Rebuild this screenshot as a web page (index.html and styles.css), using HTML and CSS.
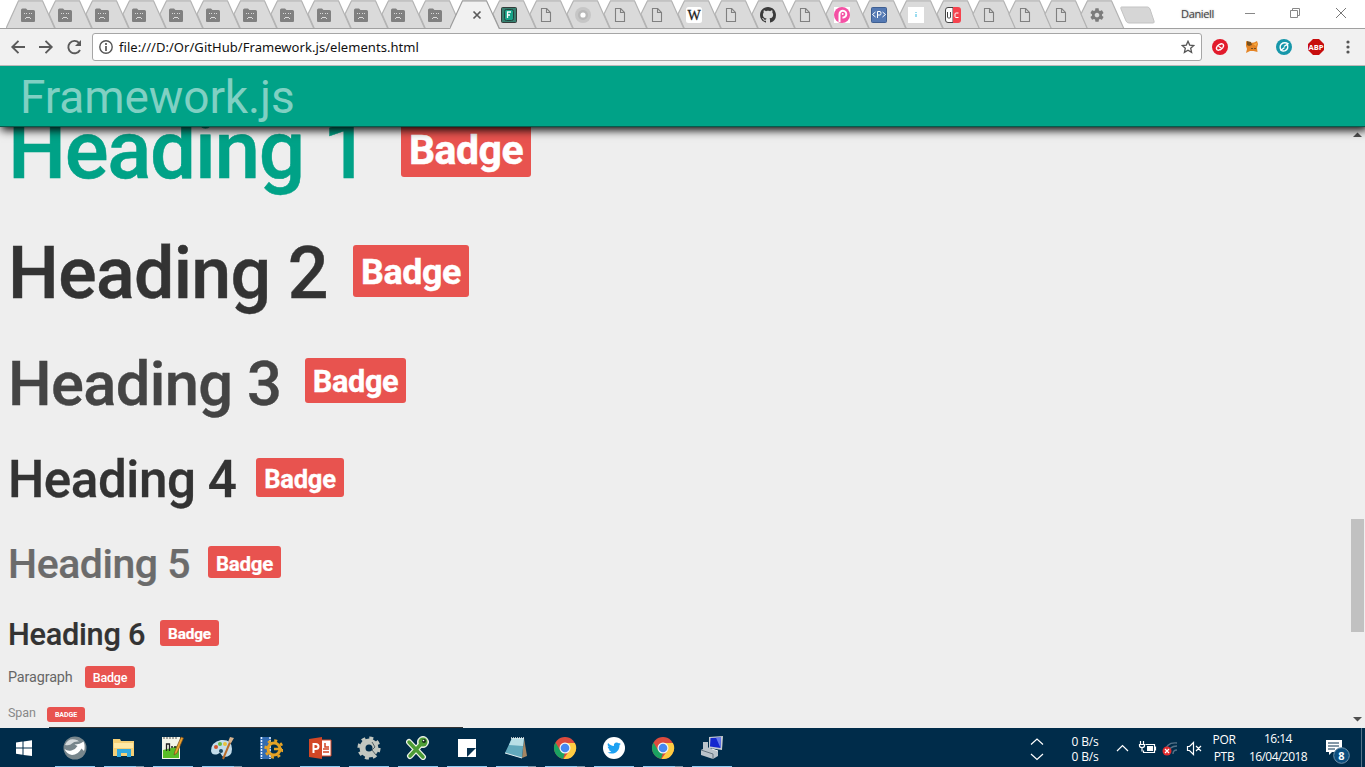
FILE: index.html
```html
<!DOCTYPE html>
<html lang="en">
<head>
<meta charset="utf-8">
<title>Framework.js</title>
<link rel="stylesheet" href="styles.css">
</head>
<body>
<svg class="defs" width="0" height="0">
  <symbol id="tab" viewBox="0 0 50 28" overflow="visible"><path d="M12.3 28.5L6 14L12.5.8H36.5L48.8 28.5" fill="#dadada" stroke="#b3b3b3" stroke-width="1.2"/></symbol>
  <symbol id="sad" viewBox="0 0 16 16"><path d="M1 3q0-1.500 1.500-1.500H6L7.500 3H13.500Q15 3 15 4.500V14q0 1-1 1H2q-1 0-1-1z" fill="#808080"/><path d="M4 6h1v1h-1zM6 6h1v1H6zM11 6h1v1h-1zM9 6h1v1H9zM5 11h1v1H5zM6 10h4v1H6zM10 11h1v1h-1z" fill="#dadada"/></symbol>
  <symbol id="doc" viewBox="0 0 16 16"><path d="M3.500 1.500H8.700L12.500 5.500V14.500H3.500zM8.500 1.500V5.500H12.500" fill="#dcdcdc" stroke="#808080" stroke-width="1.100"/></symbol>
  <symbol id="gear" viewBox="0 0 24 24"><path fill="currentColor" d="M19.430 12.980c.040-.320.070-.640.070-.980s-.030-.660-.070-.980l2.110-1.650c.190-.150.240-.420.120-.640l-2-3.460c-.120-.220-.390-.300-.610-.220l-2.490 1c-.520-.400-1.080-.730-1.690-.980l-.380-2.650C14.460 2.180 14.250 2 14 2h-4c-.250 0-.460.180-.490.420l-.380 2.650c-.610.250-1.170.590-1.690.980l-2.490-1c-.230-.090-.490 0-.610.220l-2 3.460c-.130.220-.070.490.120.640l2.110 1.650c-.040.320-.070.650-.070.980s.030.660.070.980l-2.110 1.650c-.190.150-.240.420-.120.640l2 3.460c.120.220.390.300.610.220l2.490-1c.520.400 1.080.730 1.690.980l.380 2.650c.030.240.240.420.490.420h4c.250 0 .460-.180.490-.420l.380-2.650c.610-.250 1.170-.590 1.690-.980l2.490 1c.230.090.490 0 .610-.220l2-3.460c.120-.220.070-.490-.120-.640l-2.110-1.650zM12 15.500c-1.930 0-3.500-1.570-3.500-3.500s1.570-3.500 3.500-3.500 3.500 1.570 3.500 3.500-1.570 3.500-3.500 3.500z"/></symbol>
  <symbol id="chrome" viewBox="0 0 24 24"><circle cx="12" cy="12" r="11" fill="#dd4b3e"/><path d="M2.500 6.400L7.200 14.600 12 17 10 22.900A11 11 0 0 1 2.500 6.400z" fill="#1ba261"/><path d="M12 7H21.900A11 11 0 0 1 10.500 22.900L16.500 14.500z" fill="#ffcd42"/><circle cx="12" cy="12" r="5.500" fill="#f4f4f4"/><circle cx="12" cy="12" r="4.300" fill="#4688f1"/></symbol>
</svg>

<div class="tabstrip">
  <div class="tabs">
    <div class="tab"><svg class="shape"><path d="M0 28.500L12.500.8H36.500L48.800 28.500" fill="#dadada" stroke="#b3b3b3" stroke-width="1.200"/></svg><svg class="fav"><use href="#sad"/></svg></div>
    <div class="tab"><svg class="shape"><use href="#tab"/></svg><svg class="fav"><use href="#sad"/></svg></div>
    <div class="tab"><svg class="shape"><use href="#tab"/></svg><svg class="fav"><use href="#sad"/></svg></div>
    <div class="tab"><svg class="shape"><use href="#tab"/></svg><svg class="fav"><use href="#sad"/></svg></div>
    <div class="tab"><svg class="shape"><use href="#tab"/></svg><svg class="fav"><use href="#sad"/></svg></div>
    <div class="tab"><svg class="shape"><use href="#tab"/></svg><svg class="fav"><use href="#sad"/></svg></div>
    <div class="tab"><svg class="shape"><use href="#tab"/></svg><svg class="fav"><use href="#sad"/></svg></div>
    <div class="tab"><svg class="shape"><use href="#tab"/></svg><svg class="fav"><use href="#sad"/></svg></div>
    <div class="tab"><svg class="shape"><use href="#tab"/></svg><svg class="fav"><use href="#sad"/></svg></div>
    <div class="tab"><svg class="shape"><use href="#tab"/></svg><svg class="fav"><use href="#sad"/></svg></div>
    <div class="tab"><svg class="shape"><use href="#tab"/></svg><svg class="fav"><use href="#sad"/></svg></div>
    <div class="tab"><svg class="shape"><use href="#tab"/></svg><svg class="fav"><use href="#sad"/></svg></div>
    <div class="tab active"><svg class="shape"><path d="M-.5 29L12.500.8H36.500L49.500 29" fill="#f1f1f1" stroke="#9c9c9c" stroke-width="1.200"/></svg><svg class="fav" viewBox="0 0 16 16"><path d="M4.500 4.500l7 7M11.500 4.500l-7 7" stroke="#5a5a5a" stroke-width="1.700"/></svg></div>
    <div class="tab"><svg class="shape"><use href="#tab"/></svg><svg class="fav" viewBox="0 0 16 16"><rect x=".5" y=".5" width="15" height="15" rx="1" fill="#35806f" stroke="#333c3a"/><rect x="3.500" y="2.500" width="9" height="11" rx="2" fill="#16a387" stroke="#22453e"/><path d="M6.500 11V5H10M6.500 8H9" fill="none" stroke="#fff" stroke-width="1.300"/></svg></div>
    <div class="tab"><svg class="shape"><use href="#tab"/></svg><svg class="fav"><use href="#doc"/></svg></div>
    <div class="tab"><svg class="shape"><use href="#tab"/></svg><svg class="fav" viewBox="0 0 16 16"><circle cx="8" cy="8" r="8" fill="#c6c6c6"/><circle cx="8" cy="8" r="5" fill="#b8b8b8"/><circle cx="8" cy="8" r="2.600" fill="#fff"/></svg></div>
    <div class="tab"><svg class="shape"><use href="#tab"/></svg><svg class="fav"><use href="#doc"/></svg></div>
    <div class="tab"><svg class="shape"><use href="#tab"/></svg><svg class="fav"><use href="#doc"/></svg></div>
    <div class="tab"><svg class="shape"><use href="#tab"/></svg><svg class="fav" viewBox="0 0 16 16"><rect width="16" height="16" rx="2.500" fill="#fff"/><text x="8" y="13" class="wiki" text-anchor="middle">W</text></svg></div>
    <div class="tab"><svg class="shape"><use href="#tab"/></svg><svg class="fav"><use href="#doc"/></svg></div>
    <div class="tab"><svg class="shape"><use href="#tab"/></svg><svg class="fav" viewBox="0 0 16 16"><path fill="#3b3b3b" d="M8 0C3.580 0 0 3.580 0 8c0 3.540 2.290 6.530 5.470 7.590.400.070.550-.170.550-.380 0-.190-.010-.820-.010-1.490-2.010.370-2.530-.490-2.690-.940-.090-.230-.480-.940-.820-1.130-.280-.150-.680-.520-.010-.530.630-.010 1.080.580 1.230.820.720 1.210 1.870.870 2.330.660.070-.520.280-.870.510-1.070-1.780-.200-3.640-.890-3.640-3.950 0-.870.310-1.590.820-2.150-.080-.200-.360-1.020.080-2.120 0 0 .670-.210 2.200.820.640-.180 1.320-.270 2-.270s1.360.090 2 .270c1.530-1.040 2.200-.820 2.200-.820.440 1.100.160 1.920.080 2.120.510.560.820 1.270.820 2.150 0 3.070-1.870 3.750-3.650 3.950.290.250.540.730.540 1.480 0 1.070-.010 1.930-.010 2.200 0 .210.150.460.550.380A8 8 0 0 0 16 8c0-4.420-3.580-8-8-8z"/></svg></div>
    <div class="tab"><svg class="shape"><use href="#tab"/></svg><svg class="fav"><use href="#doc"/></svg></div>
    <div class="tab"><svg class="shape"><use href="#tab"/></svg><svg class="fav" viewBox="0 0 16 16"><rect width="16" height="16" fill="#fff"/><circle cx="8" cy="8" r="8" fill="#f451a4"/><path d="M5.500 15V7.200A3.400 3.400 0 1 1 8.500 10.500" fill="none" stroke="#fff" stroke-width="2"/><circle cx="8.700" cy="7" r="1" fill="#fff"/></svg></div>
    <div class="tab"><svg class="shape"><use href="#tab"/></svg><svg class="fav" viewBox="0 0 16 16"><rect x=".5" y=".5" width="15" height="15" rx="1" fill="#5479b3" stroke="#3f5f92"/><path d="M4.500 5L1.500 7.500 4.500 10M11.500 5L14.500 7.500 11.500 10M6.500 11V4.500H9Q10 4.500 10 6.300T9 8H6.500" fill="none" stroke="#fff"/></svg></div>
    <div class="tab"><svg class="shape"><use href="#tab"/></svg><svg class="fav" viewBox="0 0 16 16"><rect width="16" height="16" fill="#fff"/><path d="M7 5h2v1H7zM7 7h2v3H7z" fill="#9adcf0"/></svg></div>
    <div class="tab short"><svg class="shape"><use href="#tab"/></svg><svg class="fav" viewBox="0 0 16 16"><path d="M3 .5H8V15.500H3Q.5 15.500.5 13V3Q.5.5 3 .5z" fill="#fff" stroke="#454545"/><path d="M8 0h5q3 0 3 3v10q0 3-3 3H8z" fill="#f5434e"/><path d="M2.500 5v5q0 1 1 1h1q1 0 1-1V5" fill="none" stroke="#444"/><path d="M13.500 6H11q-1 0-1 1v2.500q0 1 1 1h2.500" fill="none" stroke="#fff"/></svg></div>
    <div class="tab short"><svg class="shape"><use href="#tab"/></svg><svg class="fav"><use href="#doc"/></svg></div>
    <div class="tab short"><svg class="shape"><use href="#tab"/></svg><svg class="fav"><use href="#doc"/></svg></div>
    <div class="tab short"><svg class="shape"><use href="#tab"/></svg><svg class="fav"><use href="#doc"/></svg></div>
    <div class="tab short"><svg class="shape"><use href="#tab"/></svg><svg class="fav settings"><use href="#gear"/></svg></div>
  </div>
  <svg class="newtab" width="36" height="18"><path d="M1.500 1H27.500q1.500 0 2.500 2l4 12q.8 2-1 2H9q-2 0-3-2L1 3Q.3 1 1.500 1z" fill="#d6d6d6" stroke="#c3c3c3"/></svg>
  <span class="user">Daniell</span>
  <svg class="winctl" width="120" height="28"><path d="M5 13.500h10" stroke="#888"/><path d="M50.500 10.500h7v7h-7zM52.500 10V8.500h7v7H58" fill="none" stroke="#888"/><path d="M96 8l10 10M106 8l-10 10" stroke="#777"/></svg>
</div>

<div class="toolbar">
  <svg class="nav" width="84" height="28"><g fill="none" stroke="#5a5a5a" stroke-width="1.900"><path d="M25 14H12.500M18.500 7.800L12.300 14l6.200 6.200M39 14H51.500M45.500 7.800L51.700 14l-6.200 6.200M80 17A6.200 6.200 0 1 1 79 9.800"/></g><path d="M81 7v6h-6z" fill="#5a5a5a"/></svg>
  <div class="omnibox">
    <svg class="info" width="14" height="14"><circle cx="7" cy="7" r="6.200" fill="none" stroke="#555" stroke-width="1.400"/><path d="M7 3v2M7 6v5" stroke="#555" stroke-width="1.700"/></svg>
    <span class="url">file:///D:/Or/GitHub/Framework.js/elements.html</span>
    <svg class="star" width="14" height="14"><path d="M7 1.300l1.700 3.800 4.100.4-3.100 2.800.9 4.100L7 10.300l-3.600 2.100.9-4.100L1.200 5.500l4.100-.4z" fill="none" stroke="#555" stroke-width="1.300"/></svg>
  </div>
  <div class="extensions">
    <svg width="16" height="16"><circle cx="8" cy="8" r="8" fill="#e21b2c"/><path d="M7.800 5L5.200 7.300Q3.500 9.500 5.300 11q1.700.8 3-.8M8.200 11L10.800 8.700Q12.500 6.500 10.700 5 9 4.200 7.700 5.800M6.500 7.200l3 2" fill="none" stroke="#fff" stroke-width="1.300"/></svg>
    <svg width="16" height="16"><path d="M2 2l4 2 4-.5L13 2l1 3-1 4 .5 4-4-1H6l-4 2 1-4-1-3z" fill="#e58526"/><path d="M3 2l4 1 1 3-3 1-2-1z" fill="#76501f"/><path d="M7 9h2v1H7zM10 9h2v1h-2z" fill="#76501f"/><path d="M9 5l4-1-1 3z" fill="#f8ad43"/></svg>
    <svg width="16" height="16"><circle cx="8" cy="8" r="8" fill="#1797aa"/><path d="M5 11.500Q2.500 6 7 4q3-.8 5 .8L8 7.500M11.300 5.500q1.700 4-2 6.200-2.500.8-4.300-.5L8.500 8.500" fill="none" stroke="#fff" stroke-width="1.400"/></svg>
    <svg width="16" height="16"><path d="M5 0h6l5 5v6l-5 5H5l-5-5V5z" fill="#c70d0d"/><text x="8" y="11" class="abp" text-anchor="middle">ABP</text></svg>
    <svg class="menu" width="4" height="16"><circle cx="2" cy="3" r="1.600"/><circle cx="2" cy="8" r="1.600"/><circle cx="2" cy="13" r="1.600"/></svg>
  </div>
</div>

<header class="site-header"><span class="brand">Framework.js</span></header>

<div class="viewport">
  <main class="content">
    <h1 class="row h1"><span class="label">Heading 1</span><span class="badge">Badge</span></h1>
    <h2 class="row h2"><span class="label">Heading 2</span><span class="badge">Badge</span></h2>
    <h3 class="row h3"><span class="label">Heading 3</span><span class="badge">Badge</span></h3>
    <h4 class="row h4"><span class="label">Heading 4</span><span class="badge">Badge</span></h4>
    <h5 class="row h5"><span class="label">Heading 5</span><span class="badge">Badge</span></h5>
    <h6 class="row h6"><span class="label">Heading 6</span><span class="badge">Badge</span></h6>
    <p class="row para"><span class="label">Paragraph</span><span class="badge">Badge</span></p>
    <div class="row small"><span class="label">Span</span><span class="badge">BADGE</span></div>
    <div class="edge"></div>
  </main>
  <div class="scrollbar"><svg width="15" height="15"><path d="M3 10h9L7.500 5.500z" fill="#505050"/></svg><div class="thumb"></div><svg class="down" width="15" height="15"><path d="M3 4h9L7.500 8.500z" fill="#505050"/></svg></div>
</div>

<footer class="taskbar">
  <div class="apps">
    <div class="app start"><svg viewBox="0 0 24 24"><path d="M4 6.500L10.500 5.600V11.500H4zM11.500 5.400L20 4.200V11.500H11.500zM4 12.500H10.500V18.700L4 17.800zM11.500 12.500H20V20.100L11.500 18.900z" fill="#fff"/></svg></div>
    <div class="app on"><svg viewBox="0 0 24 24"><circle cx="12" cy="12" r="11.500" fill="#78868c"/><path d="M1.500 13q3 2.500 7 1.500 4-1 6-4.500l-3-1.500Q17 8.500 20.500 5.500 22.500 10 21 15l-2.500-2.500Q15 19 9 19 3.500 18 1.500 13z" fill="#fff"/><path d="M2 9Q5 2 12 3.500q3 .5 4 2-5-.5-7 2T2 9z" fill="#d5dadc"/></svg></div>
    <div class="app on multi"><svg viewBox="0 0 24 24"><path d="M1 3h7l1 2h13v15H1z" fill="#f5d077"/><path d="M2 7h19v5H2z" fill="#ffe9a5"/><path d="M5 21v-8h14v8h-4v-4H9v4z" fill="#31a9df"/></svg></div>
    <div class="app on"><svg viewBox="0 0 24 24"><path d="M1 1h18v22H1z" fill="#f3f5e9"/><path d="M2 14Q10 13 18 9v13H2z" fill="#58bd27"/><path d="M3 1v2M6 1v2M9 1v2M12 1v2M15 1v2" stroke="#555"/><path d="M5.500 15V8h3v7M10 11h2M13 11h2" fill="none" stroke="#222" stroke-width="1.300"/><path d="M20 1L14 15l-1 4 3-2 6.500-15z" fill="#eba22e" stroke="#764b20" stroke-width=".7"/></svg></div>
    <div class="app on multi"><svg viewBox="0 0 24 24"><path d="M1 15Q1 6 11 4q11-1 11 9 0 8-8 8-2 0-3-3-1-2-3 0-6 2-7-3z" fill="#c2dcea"/><circle cx="6" cy="11" r="2" fill="#d3542d"/><circle cx="10" cy="8" r="2" fill="#66b944"/><circle cx="15" cy="8" r="2" fill="#eac13a"/><circle cx="11" cy="15" r="2" fill="#194662"/><path d="M21 4L13 23" stroke="#b96c2b" stroke-width="2"/><path d="M18 6l2-5 4 1-3 5z" fill="#d7b48f"/></svg></div>
    <div class="app"><svg viewBox="0 0 24 24"><path d="M1 1h11v22H1z" fill="#326cb2"/><path d="M2.500 1v22M11 1v22" stroke="#e8f2ff" stroke-width="1.500" stroke-dasharray="2 1"/><g fill="none" stroke="#e5a225"><circle cx="15" cy="13" r="6" stroke-width="3"/><circle cx="15" cy="13" r="8.500" stroke-width="2.500" stroke-dasharray="3 3.670"/></g><path d="M15 13h8" stroke="#e5a225" stroke-width="2.500"/></svg></div>
    <div class="app on"><svg viewBox="0 0 24 24"><path d="M12 4h11v16H12z" fill="#fff" stroke="#d24726"/><path d="M15 13h6M15 16h6M17 7v4h4" stroke="#d24726" stroke-width="1.500" fill="none"/><path d="M1 3L14 1V23L1 21z" fill="#d24726"/><path d="M5.500 17V8h2q3 0 3 2.500t-3 2.500H6" fill="none" stroke="#fff" stroke-width="2"/></svg></div>
    <div class="app on"><svg viewBox="0 0 24 24" fill="none" stroke="#c2c7c0"><circle cx="12" cy="12" r="6.500" stroke-width="6"/><circle cx="12" cy="12" r="10.200" stroke-width="2.800" stroke-dasharray="4 4.010"/><path d="M15 6l3 5-3 3 4 5" stroke="#536065"/></svg></div>
    <div class="app on"><svg viewBox="0 0 24 24"><g fill="none" stroke-linecap="round"><path d="M3 6L17 21M4 20L16 7" stroke="#eef4e8" stroke-width="6"/><circle cx="17" cy="6" r="5.500" fill="#eef4e8" stroke="#eef4e8"/><path d="M3 6L17 21M4 20L16 7" stroke="#4c9c35" stroke-width="3.500"/></g><circle cx="17" cy="6" r="4.500" fill="#4c9c35"/><circle cx="18" cy="5" r="2" fill="#17301a"/><circle cx="17.500" cy="4.500" r=".8" fill="#fff"/></svg></div>
    <div class="app on"><svg viewBox="0 0 24 24"><path d="M3 3h18v18H3z" fill="#fff"/><path d="M12 12h9l-9 9z" fill="#06304f"/></svg></div>
    <div class="app on multi"><svg viewBox="0 0 24 24"><path d="M20 2l3 18-5 2z" fill="#a48562"/><path d="M8 2h12l-2 20L1 17z" fill="#62a9bc"/><path d="M8 2h12l-1 8L5 9z" fill="#b9dfe6"/><path d="M7 2h13" stroke="#eee" stroke-width="1.500" stroke-dasharray="1 1"/><path d="M1 17l17 5" stroke="#e2edf0"/></svg></div>
    <div class="app on multi"><svg><use href="#chrome"/></svg></div>
    <div class="app on"><svg viewBox="0 0 24 24"><circle cx="12" cy="12" r="11" fill="#fff"/><path transform="translate(5.200 5.200) scale(.57)" fill="#1da1f2" d="M23.950 4.570a10 10 0 0 1-2.820.770 4.960 4.960 0 0 0 2.160-2.720c-.950.550-2 .950-3.130 1.180a4.920 4.920 0 0 0-8.380 4.480C7.690 8.090 4.070 6.130 1.640 3.160a4.920 4.920 0 0 0 1.520 6.570 4.900 4.900 0 0 1-2.230-.610v.060c0 2.390 1.700 4.380 3.950 4.830a5 5 0 0 1-2.210.080 4.940 4.940 0 0 0 4.600 3.420A9.870 9.870 0 0 1 0 19.540a14 14 0 0 0 7.550 2.210c9.050 0 14-7.500 14-13.980 0-.210 0-.420-.020-.630A9.940 9.940 0 0 0 24 4.590z"/></svg></div>
    <div class="app on multi"><svg><use href="#chrome"/></svg></div>
    <div class="app on"><svg viewBox="0 0 24 24"><path d="M9 1l14-1-1 14-13-2z" fill="#c5cbd2"/><path d="M10.500 2L21 1.500 20.500 12 10 10.500z" fill="#1427cf"/><path d="M16 1.800l5-.3-.5 10.500z" fill="#6479ec"/><path d="M3 6h5v7H3zM1 14l6-3 11 4v5l-5 3-12-4z" fill="#bac3ca"/><path d="M1 14l12 4v5" fill="none" stroke="#667580"/><path d="M12 13l6 2" stroke="#eee"/></svg></div>
  </div>
  <div class="tray">
    <svg class="updown" width="14" height="28"><path d="M1 9.500L7 4l6 5.500M1 19l6 5.500L13 19" fill="none" stroke="#fff" stroke-width="1.200"/></svg>
    <div class="stack speed"><span>0 B/s</span><span>0 B/s</span></div>
    <svg class="trayicons" width="88" height="24"><g fill="none" stroke="#fff" stroke-width="1.200"><path d="M1 15l5.500-5.500L12 15M29.500 8.500H38.500V16.500H27.500V14.500M39.500 10.500v4M24.500 5v3M27.500 5v3M23.500 8.500h5v1q0 2-2.500 2t-2.500-2zM26 11.500v4"/><path d="M71.500 10.500h2l4-4v12l-4-4h-2zM80 10l5 5M85 10l-5 5"/></g><path d="M31 10h6v5h-6z" fill="#fff"/><g fill="none" stroke="#557288" stroke-width="1.300"><path d="M49 16Q50 6 61 7M53 17q0-7 8-7M57 18q0-4 4-4"/></g><circle cx="51" cy="15" r="4.500" fill="#e02b2e"/><path d="M49 13l4 4M53 13l-4 4" stroke="#fff" stroke-width="1.200"/></svg>
    <div class="stack lang"><span>POR</span><span>PTB</span></div>
    <div class="stack clock"><span>16:14</span><span>16/04/2018</span></div>
    <svg class="notify" width="26" height="28"><path d="M1 2h16v12H7l-3 3v-3H1z" fill="#fff"/><path d="M3 5h11M3 8h11M3 11h7" stroke="#09304e"/><circle cx="16.500" cy="17.500" r="7.800" fill="#0c4f7f" stroke="#7091a9"/><text x="16.500" y="22" class="count" text-anchor="middle">8</text></svg>
    <div class="desktop"></div>
  </div>
</footer>
</body>
</html>
```
FILE: styles.css
```css
* { box-sizing: border-box; }
html, body { margin: 0; height: 100%; overflow: hidden; }
body { width: 1365px; height: 767px; display: flex; flex-direction: column; background: #eee; font-family: Roboto, sans-serif; }
svg { display: block; flex: none; }
.defs { position: absolute; }

.tabstrip { display: flex; flex: none; height: 29px; background: #fff; border-bottom: 1px solid #a0a0a0; padding-left: 6px; }
.tabs { display: flex; flex: none; width: 1105px; }
.tab { position: relative; flex: none; width: 37px; height: 28px; }
.tab.short { width: 36px; }
.shape { position: absolute; left: 0; top: 0; width: 50px; height: 28px; overflow: visible; }
.tab:not(.active) .shape { overflow: hidden; }
.tab.active { z-index: 1; }
.tab.active .shape { height: 29px; overflow: hidden; }
.fav { position: absolute; left: 14px; top: 7px; width: 16px; height: 16px; }
.tab.active .fav { left: 19px; }
.settings { color: #7c7c7c; }
.wiki { font: 14px "Liberation Serif", serif; fill: #222; stroke: #222; stroke-width: .3px; }
.newtab { margin: 6px 0 0 9px; }
.user { flex: none; width: 40px; margin: 7px 0 0 25px; font: 11px/14px "Open Sans", sans-serif; letter-spacing: -.35px; color: #444; text-shadow: 0 0 2px #999; white-space: nowrap; }
.winctl { margin-left: 19px; }

.toolbar { position: relative; z-index: 3; display: flex; flex: none; height: 37px; align-items: center; background: #f1f1f1; border-bottom: 1px solid #bcb8b9; }
.nav { width: 84px; }
.omnibox { display: flex; align-items: center; width: 1110px; height: 28px; margin-left: 8px; padding: 0 6px; background: #fff; border: 1px solid #a6a6a6; border-radius: 3px; }
.url { flex: 1; margin-left: 6px; font: 13px/18px "Noto Sans", sans-serif; color: #111; letter-spacing: .05px; white-space: nowrap; }
.extensions { display: flex; align-items: center; gap: 16px; margin-left: 10px; }
.menu { margin-left: 6px; fill: #555; }
.abp { font: bold 7.500px "Open Sans", sans-serif; fill: #fff; }

.site-header { position: relative; z-index: 2; display: flex; flex: none; align-items: center; height: 61px; padding: 1px 0 0 20px; background: #00a287; border-bottom: 1px solid #065b4d; box-shadow: 2px 2px 9px 1px #000; }
.brand { font-size: 46px; line-height: 58px; letter-spacing: -.1px; color: #80d0c3; }

.viewport { display: flex; flex: none; height: 601px; overflow: hidden; }
.content { flex: 1; display: flex; flex-direction: column; padding-left: 8px; }
.row { display: flex; flex: none; align-items: center; margin: 0; font-weight: 500; color: #333; white-space: nowrap; letter-spacing: -.009em; -webkit-text-stroke: .006em currentColor; }
.label { flex: none; padding-bottom: 2px; }
.badge { flex: none; display: flex; align-items: center; justify-content: center; padding-top: 4px; border-radius: 3px; background: #e8534f; color: #fff; font-weight: 700; font-size: .5em; line-height: 1; letter-spacing: -.012em; }
.h1 { height: 100px; margin-top: -27px; font-size: 81.920px; color: #00a287; letter-spacing: -.0165em; }
.h1 .label { width: 393px; padding-bottom: 0; }
.h1 .badge { width: 130px; height: 58px; margin-bottom: 4px; }
.h2 { height: 100px; margin-top: 24px; font-size: 71.680px; }
.h2 .label { width: 345px; }
.h2 .badge { width: 116px; height: 52px; margin-bottom: 6px; }
.h3 { height: 80px; margin-top: 20px; font-size: 61.440px; color: #444; letter-spacing: -.0105em; }
.h3 .label { width: 297px; padding-bottom: 1px; }
.h3 .badge { width: 101px; height: 45px; margin-bottom: 7px; }
.h4 { height: 60px; margin-top: 26px; font-size: 51.200px; }
.h4 .label { width: 248px; }
.h4 .badge { width: 88px; height: 39px; margin-bottom: 5px; }
.h5 { height: 50px; margin-top: 30px; font-size: 40.960px; color: #6b6b6b; letter-spacing: -.0105em; }
.h5 .label { width: 200px; }
.h5 .badge { width: 73px; height: 32px; margin-bottom: 6px; }
.h6 { height: 40px; margin-top: 25px; font-size: 30.720px; }
.h6 .label { width: 152px; }
.h6 .badge { width: 59px; height: 26px; margin-bottom: 4px; }
.para { height: 22px; margin-top: 11px; font-size: 14.400px; font-weight: 400; color: #666; -webkit-text-stroke: 0; }
.para .label { width: 77px; padding: 0; }
.para .badge { width: 50px; height: 22px; font-size: 12.500px; font-weight: 500; padding-top: 2px; }
.small { height: 16px; margin-top: 17px; font-size: 12.500px; font-weight: 400; color: #888; -webkit-text-stroke: 0; }
.small .label { width: 39px; }
.small .badge { width: 38px; height: 15px; margin-top: 3px; padding-top: 1px; font-size: 7px; }
.edge { flex: none; width: 414px; height: 1px; margin: 6px 0 0 41px; background: #333; }
.scrollbar { display: flex; flex-direction: column; width: 15px; background: #efefef; }
.thumb { width: 13px; height: 113px; margin: 377px 0 0 1px; background: #c1c1c1; }
.down { margin-top: auto; }

.taskbar { display: flex; flex: none; height: 39px; background: #002c4a; color: #fff; }
.apps { display: flex; flex: none; width: 1030px; }
.app { display: flex; align-items: center; justify-content: center; flex: none; width: 40px; height: 39px; margin-right: 9px; border-bottom: 1px solid transparent; }
.app svg { width: 24px; height: 24px; }
.app > svg { margin-top: 2px; }
.app.start { width: 48px; margin-right: 7px; }
.app.on { border-bottom-color: #8fcdf3; }
.app.multi { border-image: linear-gradient(90deg, #8fcdf3 31px, #7899ad 31px) 1; border-width: 0 0 1px; }
.tray { display: flex; flex: 1; align-items: center; }
.updown { margin-top: 2px; }
.stack { display: flex; flex: none; flex-direction: column; font: 12px/15px "Open Sans", sans-serif; white-space: nowrap; text-align: center; margin-top: 3px; }
.speed { width: 30px; margin-left: 26px; letter-spacing: -.2px; }
.trayicons { margin-left: 16px; margin-top: 1px; }
.lang { width: 26px; margin-left: 7px; line-height: 17px; margin-top: 1px; letter-spacing: -.3px; }
.clock { width: 60px; margin-left: 11px; line-height: 18px; margin-top: 0; letter-spacing: -.55px; }
.notify { margin: 8px 0 0 17px; }
.count { font: bold 11px "Open Sans", sans-serif; fill: #fff; }
.desktop { width: 1px; height: 39px; margin-left: auto; margin-right: 3px; background: #567388; }
```
